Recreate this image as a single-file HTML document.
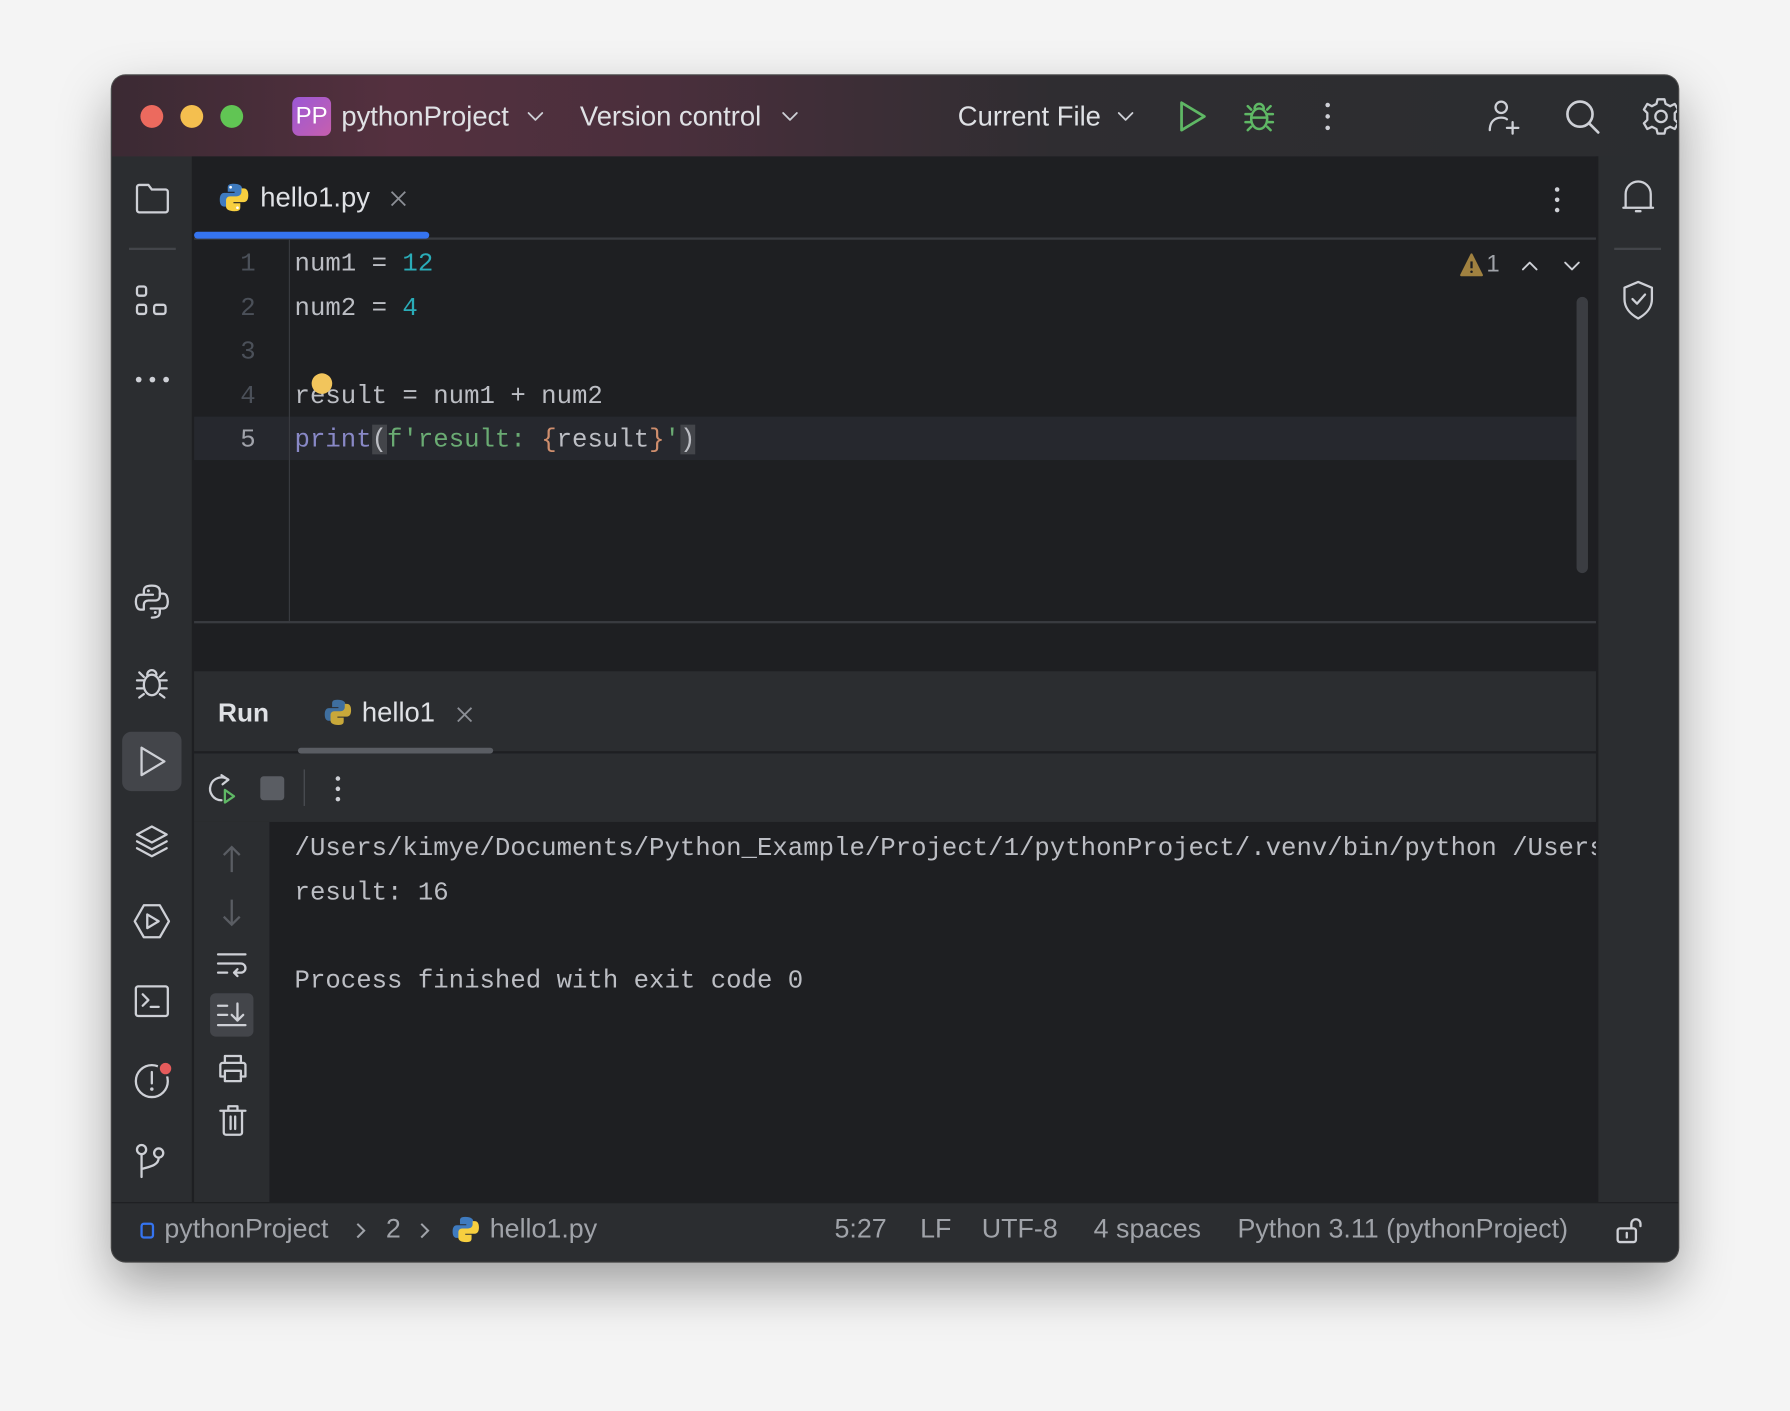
<!DOCTYPE html>
<html><head><meta charset="utf-8">
<style>
*{box-sizing:border-box;margin:0;padding:0}
html,body{width:1790px;height:1410px;overflow:hidden;background:#f4f4f4}
#s{position:absolute;left:0;top:0;width:1568px;height:1236px;transform:scale(1.1416);transform-origin:0 0;font-family:"Liberation Sans",sans-serif}
.a{position:absolute}
.win{position:absolute;left:98px;top:66px;width:1372px;height:1039px;border-radius:12px;overflow:hidden;background:#2b2d30;box-shadow:0 20px 45px rgba(0,0,0,.35),0 0 0 1px #555}
.t{color:#dfe1e5;font-size:24px;white-space:nowrap}
.mono{font-family:"Liberation Mono",monospace;font-size:22.5px;white-space:pre;color:#bcbec4}
svg{position:absolute;overflow:visible}
.ic{fill:none;stroke:#ced0d6;stroke-width:2;stroke-linecap:round;stroke-linejoin:round}
.st{color:#a0a3a9;font-size:23.5px;position:absolute;top:1063px;white-space:nowrap}
</style></head><body><div id="s">
<div class="win">
 <div class="a" style="left:0;top:0;width:1372px;height:71px;background:linear-gradient(90deg,#3b2a33 0%,#54303f 18%,#4a2f3c 35%,#2f2d31 60%,#2b2d30 100%)"></div>
</div>
<div class="a" style="left:123px;top:92px;width:20px;height:20px;border-radius:50%;background:#ec6a5e"></div>
<div class="a" style="left:158px;top:92px;width:20px;height:20px;border-radius:50%;background:#f4bf4f"></div>
<div class="a" style="left:193px;top:92px;width:20px;height:20px;border-radius:50%;background:#61c554"></div>
<div class="a" style="left:256px;top:85px;width:34px;height:34px;border-radius:6px;background:linear-gradient(135deg,#9b58d6,#c65fae);color:#fff;font-size:21px;line-height:34px;text-align:center">PP</div>
<div class="a t" style="left:299px;top:89px">pythonProject</div>
<svg style="left:462px;top:97px" width="14" height="10"><path class="ic" d="M1 2l6 6 6-6" style="stroke-width:1.6"/></svg>
<div class="a t" style="left:508px;top:89px">Version control</div>
<svg style="left:685px;top:97px" width="14" height="10"><path class="ic" d="M1 2l6 6 6-6" style="stroke-width:1.6"/></svg>
<div class="a t" style="left:839px;top:89px">Current File</div>
<svg style="left:979px;top:97px" width="14" height="10"><path class="ic" d="M1 2l6 6 6-6" style="stroke-width:1.6"/></svg>
<svg style="left:1033px;top:88px" width="24" height="28"><path d="M2 2v24l20-12z" fill="none" stroke="#5fb865" stroke-width="2.4" stroke-linejoin="round"/></svg>
<svg style="left:1089px;top:88px" width="28" height="28"><g fill="none" stroke="#5fb865" stroke-width="2.2" stroke-linecap="round"><ellipse cx="14" cy="16" rx="7" ry="9"/><path d="M10 7a4 4 0 0 1 8 0M7 12H2M7 19H2M21 12h5M21 19h5M4 5l3 3M24 5l-3 3M4 26l3-3M24 26l-3-3M7 15h14"/></g></svg>
<div class="a" style="left:1161px;top:90px;width:4px;height:4px;border-radius:50%;background:#ced0d6;box-shadow:0 10px 0 #ced0d6,0 20px 0 #ced0d6"></div>
<svg style="left:1302px;top:86px" width="32" height="32"><g class="ic"><circle cx="13" cy="8" r="5"/><path d="M3 28c0-7 4-11 10-11 2 0 4 .5 5 1.5M23 21v10M18 26h10"/></g></svg>
<svg style="left:1370px;top:86px" width="32" height="32"><g class="ic" style="stroke-width:2.3"><circle cx="14" cy="14" r="11"/><path d="M22 22l8 8"/></g></svg>
<div class="a" style="left:1430px;top:80px;width:39px;height:45px;overflow:hidden">
<svg style="left:8px;top:5px" width="34" height="34"><g class="ic"><circle cx="17" cy="17" r="5"/><path d="M14 2h6l1 4 4 2 4-2 3 5-3 3v6l3 3-3 5-4-2-4 2-1 4h-6l-1-4-4-2-4 2-3-5 3-3v-6l-3-3 3-5 4 2 4-2z"/></g></svg>
</div>

<div class="a" style="left:170px;top:137px;width:1230px;height:916px;background:#1e1f22"></div>
<div class="a" style="left:1398px;top:137px;width:2px;height:916px;background:#1e1f22"></div>
<div class="a" style="left:168px;top:137px;width:2px;height:916px;background:#1e1f22"></div>
<svg style="left:118px;top:160px" width="32" height="28"><path class="ic" d="M2 4a2 2 0 0 1 2-2h8l3 4h12a2 2 0 0 1 2 2v16a2 2 0 0 1-2 2H4a2 2 0 0 1-2-2z"/></svg>
<div class="a" style="left:113px;top:217px;width:41px;height:2px;background:#43454a"></div>
<svg style="left:118px;top:249px" width="32" height="30"><g class="ic"><rect x="2" y="2" width="8" height="8" rx="2"/><rect x="2" y="18" width="8" height="8" rx="2"/><rect x="17" y="18" width="10" height="8" rx="2"/></g></svg>
<div class="a" style="left:119px;top:330px;width:5px;height:5px;border-radius:50%;background:#ced0d6;box-shadow:12px 0 0 #ced0d6,24px 0 0 #ced0d6"></div>
<svg style="left:117px;top:511px" width="32" height="32"><g class="ic"><path d="M16 2c-6 0-7 2-7 5v3h8M9 10H6c-3 0-4 3-4 6s1 7 4 7h3v-4c0-3 2-4 4-4h6c3 0 4-2 4-4V7c0-3-2-5-7-5"/><path d="M16 30c6 0 7-2 7-5v-3h-8M23 22h3c3 0 4-3 4-6s-1-7-4-7h-3"/></g><circle cx="13" cy="6.5" r="1.3" fill="#ced0d6"/><circle cx="19" cy="25.5" r="1.3" fill="#ced0d6"/></svg>
<svg style="left:117px;top:582px" width="32" height="32"><g class="ic"><ellipse cx="16" cy="18" rx="7" ry="9"/><path d="M12 9a4 4 0 0 1 8 0M9 14H3M9 21H3M23 14h6M23 21h6M5 7l4 4M27 7l-4 4M5 29l4-3M27 29l-4-3"/></g></svg>
<div class="a" style="left:107px;top:641px;width:52px;height:52px;border-radius:8px;background:#43454a"></div>
<svg style="left:121px;top:653px" width="26" height="28"><path class="ic" d="M3 2v24l20-12z"/></svg>
<svg style="left:117px;top:721px" width="32" height="32"><g class="ic"><path d="M16 3L3 10l13 7 13-7z"/><path d="M3 16l13 7 13-7M3 22l13 7 13-7"/></g></svg>
<svg style="left:116px;top:790px" width="34" height="34"><g class="ic"><path d="M10 3h14l8 14-8 14H10L2 17z"/><path d="M13 11v12l10-6z"/></g></svg>
<svg style="left:117px;top:862px" width="32" height="30"><g class="ic"><rect x="2" y="2" width="28" height="26" rx="2"/><path d="M8 9l5 5-5 5M15 20h7"/></g></svg>
<svg style="left:116px;top:930px" width="34" height="34"><g class="ic"><circle cx="17" cy="17" r="14"/><path d="M17 9v10"/></g><circle cx="17" cy="24" r="1.5" fill="#ced0d6"/></svg>
<div class="a" style="left:138px;top:929px;width:14px;height:14px;border-radius:50%;background:#e55b5b;border:2px solid #2b2d30"></div>
<svg style="left:117px;top:1000px" width="32" height="34"><g class="ic"><circle cx="7" cy="7" r="4"/><circle cx="22" cy="10" r="4"/><path d="M7 11v20M22 14c0 7-8 8-15 10"/></g></svg>

<svg style="left:1420px;top:156px" width="32" height="36"><g class="ic"><path d="M4 26V14a11 11 0 0 1 22 0v12zM2 26h26M13 29h4"/></g></svg>
<div class="a" style="left:1414px;top:217px;width:41px;height:2px;background:#43454a"></div>
<svg style="left:1420px;top:245px" width="32" height="36"><g class="ic"><path d="M15 2l12 5v10c0 8-5 13-12 17C8 30 3 25 3 17V7z"/><path d="M10 17l4 4 7-8"/></g></svg>

<svg style="left:192px;top:160px" width="26" height="26" viewBox="0 0 26 26"><path d="M12.5 1c-5 0-5 2-5 4v3h6v1H4.5c-2.5 0-4 2-4 6s1.5 6 4 6h2v-3c0-2.5 2-4 4.5-4h5.5c2 0 3.5-1.5 3.5-3.5V5c0-2-2-4-7.5-4z" fill="#3f7bbf"/><path d="M13.5 25c5 0 5-2 5-4v-3h-6v-1h9c2.5 0 4-2 4-6s-1.5-6-4-6h-2v3c0 2.5-2 4-4.5 4H9.5C7.5 12 6 13.5 6 15.5V21c0 2 2 4 7.5 4z" fill="#f7cf3f"/><circle cx="10" cy="4" r="1.2" fill="#fff"/><circle cx="16" cy="22" r="1.2" fill="#fff"/></svg>
<div class="a t" style="left:228px;top:160px">hello1.py</div>
<svg style="left:342px;top:167px" width="14" height="14"><path d="M1 1l12 12M13 1L1 13" stroke="#8c8f96" stroke-width="1.6"/></svg>
<div class="a" style="left:170px;top:208px;width:1228px;height:2px;background:#393b40"></div>
<div class="a" style="left:170px;top:203px;width:206px;height:6px;border-radius:3px;background:#3574f0"></div>
<div class="a" style="left:1362px;top:164px;width:4px;height:4px;border-radius:50%;background:#ced0d6;box-shadow:0 9px 0 #ced0d6,0 18px 0 #ced0d6"></div>

<div class="a" style="left:170px;top:365px;width:1212px;height:38px;background:#26282e"></div>
<div class="a" style="left:253px;top:210px;width:1px;height:335px;background:#393b40"></div>
<div class="a mono" style="left:196px;top:212px;width:28px;text-align:right;color:#4b5059;line-height:38.5px">1
2
3
4
<span style="color:#a1a3ab">5</span></div>
<div class="a mono" style="left:258px;top:212px;line-height:38.5px">num1 = <span style="color:#2aacb8">12</span>
num2 = <span style="color:#2aacb8">4</span>

result = num1 + num2
<span style="color:#8888c6">print</span><span style="background:#43454a">(</span><span style="color:#6aab73">f'result: </span><span style="color:#cf8e6d">{</span>result<span style="color:#cf8e6d">}</span><span style="color:#6aab73">'</span><span style="background:#43454a">)</span></div>
<div class="a" style="left:273px;top:327px;width:18px;height:18px;border-radius:50%;background:#f2c55c"></div>
<svg style="left:1279px;top:222px" width="20" height="20"><path d="M10 1L19 19H1z" fill="#a08140" stroke="#a08140" stroke-linejoin="round" stroke-width="2"/><path d="M10 7v6" stroke="#1e1f22" stroke-width="2"/><circle cx="10" cy="16" r="1.1" fill="#1e1f22"/></svg>
<div class="a" style="left:1302px;top:220px;color:#a0a3a9;font-size:21px">1</div>
<svg style="left:1333px;top:228px" width="14" height="10"><path class="ic" style="stroke-width:1.6" d="M1 8l6-6 6 6"/></svg>
<svg style="left:1370px;top:228px" width="14" height="10"><path class="ic" style="stroke-width:1.6" d="M1 2l6 6 6-6"/></svg>
<div class="a" style="left:1381px;top:260px;width:10px;height:242px;border-radius:5px;background:#3b3d42"></div>
<div class="a" style="left:170px;top:544px;width:1228px;height:2px;background:#393b40"></div>

<div class="a" style="left:170px;top:588px;width:1228px;height:132px;background:#2b2d30"></div>
<div class="a" style="left:170px;top:658px;width:1228px;height:2px;background:#1e1f22"></div>
<div class="a t" style="left:191px;top:611px;font-weight:bold;font-size:23px">Run</div>
<svg style="left:284px;top:612px" width="24" height="24" viewBox="0 0 26 26"><path d="M12.5 1c-5 0-5 2-5 4v3h6v1H4.5c-2.5 0-4 2-4 6s1.5 6 4 6h2v-3c0-2.5 2-4 4.5-4h5.5c2 0 3.5-1.5 3.5-3.5V5c0-2-2-4-7.5-4z" fill="#3f6f9f"/><path d="M13.5 25c5 0 5-2 5-4v-3h-6v-1h9c2.5 0 4-2 4-6s-1.5-6-4-6h-2v3c0 2.5-2 4-4.5 4H9.5C7.5 12 6 13.5 6 15.5V21c0 2 2 4 7.5 4z" fill="#c8a83a"/></svg>
<div class="a t" style="left:317px;top:611px">hello1</div>
<svg style="left:400px;top:619px" width="14" height="14"><path d="M1 1l12 12M13 1L1 13" stroke="#8c8f96" stroke-width="1.6"/></svg>
<div class="a" style="left:261px;top:655px;width:171px;height:5px;border-radius:3px;background:#5a5d63"></div>
<svg style="left:180px;top:677px" width="28" height="28"><g class="ic"><path d="M20 6a10 10 0 1 0-6 18"/><path d="M14 2l6 4-5 4"/></g><path d="M17 15v11l8-5.5z" fill="none" stroke="#5fb865" stroke-width="2" stroke-linejoin="round"/></svg>
<div class="a" style="left:228px;top:680px;width:21px;height:21px;border-radius:3px;background:#5a5d63"></div>
<div class="a" style="left:266px;top:674px;width:1px;height:32px;background:#4e5157"></div>
<div class="a" style="left:294px;top:680px;width:4px;height:4px;border-radius:50%;background:#ced0d6;box-shadow:0 9px 0 #ced0d6,0 18px 0 #ced0d6"></div>
<div class="a" style="left:170px;top:720px;width:66px;height:333px;background:#2b2d30"></div>
<svg style="left:193px;top:740px" width="20" height="26"><path d="M10 2v22M3 9l7-7 7 7" fill="none" stroke="#5a5d63" stroke-width="2"/></svg>
<svg style="left:193px;top:786px" width="20" height="26"><path d="M10 2v22M3 17l7 7 7-7" fill="none" stroke="#5a5d63" stroke-width="2"/></svg>
<svg style="left:189px;top:832px" width="30" height="28"><g class="ic"><path d="M2 4h24M2 12h20a4 4 0 0 1 0 8h-6M19 17l-3 3 3 3M2 20h8"/></g></svg>
<div class="a" style="left:184px;top:870px;width:38px;height:38px;border-radius:5px;background:#43454a"></div>
<svg style="left:189px;top:876px" width="30" height="28"><g class="ic"><path d="M2 5h8M2 13h8M2 22h24M19 3v15M14 13l5 5 5-5"/></g></svg>
<svg style="left:190px;top:922px" width="28" height="28"><g class="ic"><path d="M7 9V3h14v6M5 9h18a2 2 0 0 1 2 2v10h-4M7 21H3V11a2 2 0 0 1 2-2"/><rect x="7" y="16" width="14" height="9"/></g></svg>
<svg style="left:191px;top:966px" width="26" height="30"><g class="ic"><path d="M2 7h22M9 7V3h8v4M5 7v19a2 2 0 0 0 2 2h12a2 2 0 0 0 2-2V7M11 12v11M15 12v11"/></g></svg>
<div class="a mono" style="left:258px;top:724px;line-height:38.6px;width:1140px;overflow:hidden">/Users/kimye/Documents/Python_Example/Project/1/pythonProject/.venv/bin/python /Users/kimye
result: 16

Process finished with exit code 0</div>

<div class="a" style="left:98px;top:1053px;width:1372px;height:1px;background:#1e1f22"></div>
<div class="a" style="left:123px;top:1071px;width:12px;height:14px;border:2px solid #3574f0;border-radius:3px"></div>
<div class="st" style="left:144px">pythonProject</div>
<svg style="left:311px;top:1070px" width="10" height="16"><path d="M2 2l6 6-6 6" fill="none" stroke="#a0a3a9" stroke-width="1.8"/></svg>
<div class="st" style="left:338px">2</div>
<svg style="left:367px;top:1070px" width="10" height="16"><path d="M2 2l6 6-6 6" fill="none" stroke="#a0a3a9" stroke-width="1.8"/></svg>
<svg style="left:396px;top:1065px" width="24" height="24" viewBox="0 0 26 26"><path d="M12.5 1c-5 0-5 2-5 4v3h6v1H4.5c-2.5 0-4 2-4 6s1.5 6 4 6h2v-3c0-2.5 2-4 4.5-4h5.5c2 0 3.5-1.5 3.5-3.5V5c0-2-2-4-7.5-4z" fill="#3f7bbf"/><path d="M13.5 25c5 0 5-2 5-4v-3h-6v-1h9c2.5 0 4-2 4-6s-1.5-6-4-6h-2v3c0 2.5-2 4-4.5 4H9.5C7.5 12 6 13.5 6 15.5V21c0 2 2 4 7.5 4z" fill="#f7cf3f"/></svg>
<div class="st" style="left:429px">hello1.py</div>
<div class="st" style="left:731px">5:27</div>
<div class="st" style="left:806px">LF</div>
<div class="st" style="left:860px">UTF-8</div>
<div class="st" style="left:958px">4 spaces</div>
<div class="st" style="left:1084px">Python 3.11 (pythonProject)</div>
<svg style="left:1415px;top:1066px" width="26" height="26"><g class="ic"><rect x="2" y="10" width="16" height="12" rx="2"/><path d="M14 10V6a4 4 0 0 1 8 0v2M10 14v4"/></g></svg>
</div></body></html>
